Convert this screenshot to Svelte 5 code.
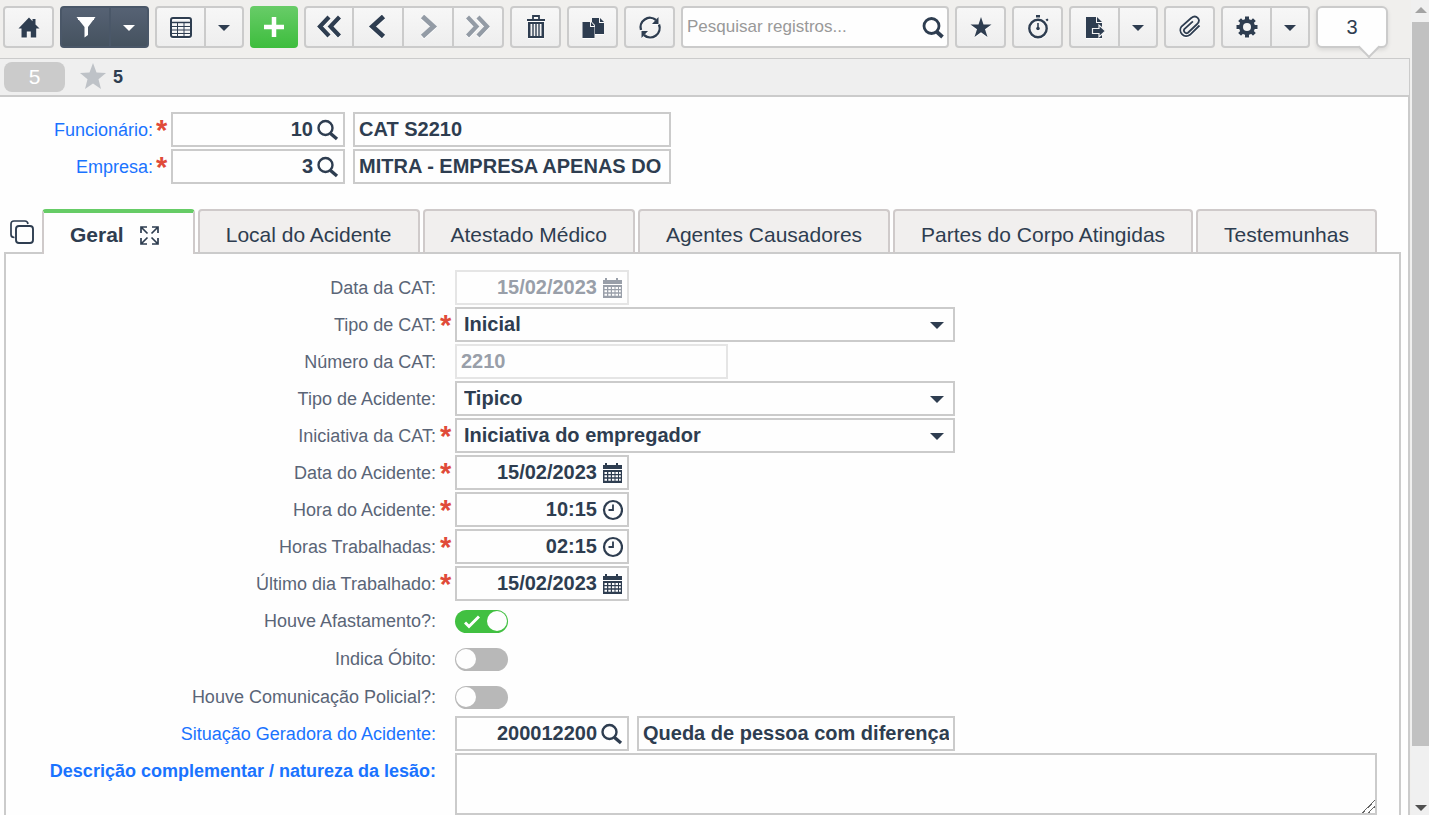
<script>
  let employee = $state('10');
  let company = $state('3');
  let search = $state('');
  let activeTab = $state('Geral');

  const tabs = [
    'Geral',
    'Local do Acidente',
    'Atestado Médico',
    'Agentes Causadores',
    'Partes do Corpo Atingidas',
    'Testemunhas'
  ];

  let fields = $state([
    { id: 'data-cat', label: 'Data da CAT:', type: 'date', value: '15/02/2023', disabled: true },
    { id: 'tipo-cat', label: 'Tipo de CAT:', type: 'select', value: 'Inicial', options: ['Inicial', 'Reabertura'], required: true },
    { id: 'numero-cat', label: 'Número da CAT:', type: 'text', value: '2210', disabled: true },
    { id: 'tipo-acidente', label: 'Tipo de Acidente:', type: 'select', value: 'Tipico', options: ['Tipico', 'Trajeto'] },
    { id: 'iniciativa', label: 'Iniciativa da CAT:', type: 'select', value: 'Iniciativa do empregador', options: ['Iniciativa do empregador', 'Ordem judicial'], required: true },
    { id: 'data-acidente', label: 'Data do Acidente:', type: 'date', value: '15/02/2023', required: true },
    { id: 'hora-acidente', label: 'Hora do Acidente:', type: 'time', value: '10:15', required: true },
    { id: 'horas-trabalhadas', label: 'Horas Trabalhadas:', type: 'time', value: '02:15', required: true },
    { id: 'ultimo-dia', label: 'Último dia Trabalhado:', type: 'date', value: '15/02/2023', required: true }
  ]);

  let toggles = $state([
    { id: 'afastamento', label: 'Houve Afastamento?:', checked: true },
    { id: 'obito', label: 'Indica Óbito:', checked: false },
    { id: 'policial', label: 'Houve Comunicação Policial?:', checked: false }
  ]);

  let situation = $state('200012200');
  let description = $state('');
</script>

{#snippet icon(name)}
  <svg class="icon" viewBox="0 0 24 24" width="24" height="24" aria-hidden="true">
    {#if name === 'home'}
      <path d="M12 2.500 1.500 13.500H4.500v9h5.300v-6h4v6h5.400v-9h3.300L18.500 9.400V4h-3v2.200z" />
    {:else if name === 'filter'}
      <path d="M2.500 2h19L14 12v8l-3.500 2.500V12z" />
      <path class="line" d="M4 4.500h16" stroke="#bfc5cc" />
    {:else if name === 'table'}
      <rect class="line" x="2" y="3" width="20" height="19" rx="2" stroke-width="2" />
      <path class="line" d="M2 7.500h20" stroke-width="1.500" />
      <path class="line" d="M2 11.500h20M2 15h20M2 18.500h20M8.500 8v14M15 8v14" stroke-width="1" />
    {:else if name === 'plus'}
      <path class="line" d="M12 2v20M2 12h20" stroke-width="4.500" />
    {:else if name === 'first'}
      <path class="line" d="M12 2 3 11.500l9 9.500M22.500 2l-9 9.500 9 9.500" stroke-width="4.200" />
    {:else if name === 'prev'}
      <path class="line" d="M17.500 1.500 6.500 11.500l11 10" stroke-width="4.800" />
    {:else if name === 'next'}
      <path class="line" d="M6.500 1.500l11 10-11 10" stroke-width="4.800" />
    {:else if name === 'last'}
      <path class="line" d="M1.500 2l9 9.500-9 9.500M12 2l9 9.500-9 9.500" stroke-width="4.200" />
    {:else if name === 'trash'}
      <path class="line" d="M9 4V1h6v3" stroke-width="1.800" />
      <path d="M3 4h18v2H3z" />
      <path fill-rule="evenodd" d="M4 7h16v16H4zM6.500 9v12h1.800V9zM9.700 9v12h1.600V9zM12.700 9v12h1.600V9zM15.700 9v12h1.800V9z" />
    {:else if name === 'copy'}
      <path d="M11 3h7v5h5v11H14V10l-3-3z" />
      <path d="M19 3l4 4h-4z" />
      <path d="M1.500 7H9v5h4.500v11h-12zM10 7l3.500 4H10z" />
    {:else if name === 'refresh'}
      <path class="line" d="M3 15A9.400 9.400 0 0 1 18 5M21 9.500A9.400 9.400 0 0 1 6 20" stroke-width="2.400" />
      <path d="M20.500 2v7h-6.500zM3.500 23v-7h6.500z" />
    {:else if name === 'search'}
      <circle class="line" cx="10.500" cy="11" r="7.500" stroke-width="2.800" />
      <path class="line" d="m15.500 16.500 6 5.500" stroke-width="3.800" />
    {:else if name === 'star'}
      <path d="m12 2 2.500 7.500H22.500L16 14.200l2.500 7.800-6.500-4.800L5.500 22 8 14.200 1.500 9.500h8z" />
    {:else if name === 'stopwatch'}
      <circle class="line" cx="12" cy="13.500" r="8.700" stroke-width="2.400" />
      <path d="M10 0h4v2.500h-4zM19.500 4.500l2-1 1 1.500-1.500 1.500z" />
      <path class="line" d="M12 8v7" stroke-width="1.600" />
      <circle cx="12" cy="13.500" r="1.800" />
    {:else if name === 'export'}
      <path d="M3 2h10v6h6v15H3zM14 2l5 5h-5z" />
      <path d="M9.500 13.500H16v-3.500l6.500 6-6.500 6v-3.500H9.500z" stroke="#f2f2f2" stroke-width="1.200" />
    {:else if name === 'clip'}
      <path class="line" d="m21.500 10.500-9.500 9.300a6 6 0 0 1-8.500-8.300l9.700-8.500c5-4 10.300 1.500 6 6l-9.200 8.700a2.600 2.600 0 0 1-3.600-3.600l8.500-7.800" stroke-width="1.800" />
    {:else if name === 'gear'}
      <path class="line" d="M12 1.500v21M1.500 12h21M4.600 4.600l14.800 14.800M19.400 4.600 4.600 19.400" stroke-width="4" />
      <circle cx="12" cy="12" r="8" />
      <circle cx="12" cy="12" r="4" fill="#f3f3f3" />
    {/if}
  </svg>
{/snippet}

{#snippet caret()}
  <svg class="caret" viewBox="0 0 14 7" width="14" height="7" aria-hidden="true">
    <path d="M0 0h14L7 7z" />
  </svg>
{/snippet}

{#snippet toolButton(name, label)}
  <button type="button" class="tool" aria-label={label}>{@render icon(name)}</button>
{/snippet}

{#snippet splitButton(name, label, dark)}
  <div class="group" class:dark>
    <button type="button" class="tool" aria-label={label}>{@render icon(name)}</button>
    <button type="button" class="tool more" aria-label="Mais opções de {label}">{@render caret()}</button>
  </div>
{/snippet}

{#snippet fieldIcon(type)}
  <svg viewBox="0 0 22 22" width="22" height="22" aria-hidden="true">
    {#if type === 'date'}
      <path d="M2 3h2V1h2v2h9V1h2v2h4v4H2z" />
      <path fill-rule="evenodd" d="M2 8h19v13H2zM3.500 10v2h2.500v-2zM7.300 10v2h2.500v-2zM11 10v2h2.500v-2zM14.500 10v2H17v-2zM18 10v2h1.800v-2zM3.500 13.300v2h2.500v-2zM7.300 13.300v2h2.500v-2zM11 13.300v2h2.500v-2zM14.500 13.300v2H17v-2zM18 13.300v2h1.800v-2zM3.500 16.700v2h2.500v-2zM7.300 16.700v2h2.500v-2zM11 16.700v2h2.500v-2zM14.500 16.700v2H17v-2zM18 16.700v2h1.800v-2z" />
    {:else if type === 'time'}
      <circle class="line" cx="12" cy="11" r="9" stroke-width="2.200" />
      <path class="line" d="M12 5.500V11H7.500" stroke-width="1.800" />
    {:else}
      <circle class="line" cx="8.500" cy="9" r="7" stroke-width="2.400" />
      <path class="line" d="m13.500 14.500 6.500 5.500" stroke-width="3.400" />
    {/if}
  </svg>
{/snippet}

<div class="app">
  <div class="page">
    <header class="toolbar">
      {@render toolButton('home', 'Início')}
      {@render splitButton('filter', 'Filtro', true)}
      {@render splitButton('table', 'Grade', false)}
      <button type="button" class="tool add" aria-label="Novo">{@render icon('plus')}</button>
      <div class="group nav">
        <button type="button" class="tool" aria-label="Primeiro">{@render icon('first')}</button>
        <button type="button" class="tool" aria-label="Anterior">{@render icon('prev')}</button>
        <button type="button" class="tool" aria-label="Próximo" disabled>{@render icon('next')}</button>
        <button type="button" class="tool" aria-label="Último" disabled>{@render icon('last')}</button>
      </div>
      {@render toolButton('trash', 'Excluir')}
      {@render toolButton('copy', 'Duplicar')}
      {@render toolButton('refresh', 'Atualizar')}
      <div class="search">
        <input type="text" aria-label="Pesquisar registros" placeholder="Pesquisar registros..." bind:value={search} />
        <button type="button" aria-label="Pesquisar">{@render icon('search')}</button>
      </div>
      {@render toolButton('star', 'Favoritos')}
      {@render toolButton('stopwatch', 'Cronômetro')}
      {@render splitButton('export', 'Exportar', false)}
      {@render toolButton('clip', 'Anexos')}
      {@render splitButton('gear', 'Configurações', false)}
      <div class="bubble">3</div>
    </header>

    <div class="status">
      <span class="pill">5</span>
      <svg class="rating" viewBox="0 0 28 28" width="28" height="28" aria-hidden="true">
        <path d="m14 0 3.500 9.500 9.500.500-7.500 6.200L22 26l-8-5.500L6 26l2.500-9.800L1 10l9.500-.500z" />
      </svg>
      <strong>5</strong>
    </div>

    <main>
      <section class="head">
        <div class="row">
          <label class="link" for="funcionario">Funcionário:</label>
          <span class="required">*</span>
          <div class="box short">
            <input id="funcionario" class="right" type="text" bind:value={employee} />
            <button type="button" aria-label="Buscar funcionário">{@render fieldIcon('search')}</button>
          </div>
          <div class="box name">
            <input type="text" aria-label="Nome do funcionário" value="CAT S2210" readonly />
          </div>
        </div>
        <div class="row">
          <label class="link" for="empresa">Empresa:</label>
          <span class="required">*</span>
          <div class="box short">
            <input id="empresa" class="right" type="text" bind:value={company} />
            <button type="button" aria-label="Buscar empresa">{@render fieldIcon('search')}</button>
          </div>
          <div class="box name">
            <input type="text" aria-label="Nome da empresa" value="MITRA - EMPRESA APENAS DO" readonly />
          </div>
        </div>
      </section>

      <div class="tabs">
        <button type="button" class="windows" aria-label="Exibir abas">
          <svg viewBox="0 0 24 24" width="24" height="24" aria-hidden="true">
            <path class="line" d="M4.500 17.500C2 17.500 1 16.500 1 14.500V4q0-3 3-3h11q2.500 0 3 3" stroke-width="1.700" />
            <rect class="line" x="6" y="6" width="17" height="17" rx="3" stroke-width="1.900" />
          </svg>
        </button>
        <div class="tablist" role="tablist">
          {#each tabs as tab}
            <button
              type="button"
              role="tab"
              class="tab"
              class:active={tab === activeTab}
              aria-selected={tab === activeTab}
              onclick={() => (activeTab = tab)}
            >
              {tab}
              {#if tab === activeTab}
                <svg viewBox="0 0 19 19" width="19" height="19" aria-hidden="true">
                  <path class="line" d="M1 7V1h6M12 1h6v6M18 12v6h-6M7 18H1v-6M1 1l6.500 6.500M18 1l-6.500 6.500M18 18l-6.500-6.500M1 18l6.500-6.500" stroke-width="1.700" />
                </svg>
              {/if}
            </button>
          {/each}
        </div>
      </div>

      <section class="panel">
        {#each fields as field (field.id)}
          <div class="row">
            <label for={field.id}>{field.label}</label>
            <span class="required">{field.required ? '*' : ''}</span>
            {#if field.type === 'select'}
              <div class="box select">
                <select id={field.id} bind:value={field.value}>
                  {#each field.options as option}
                    <option>{option}</option>
                  {/each}
                </select>
                {@render caret()}
              </div>
            {:else if field.type === 'text'}
              <div class="box medium" class:disabled={field.disabled}>
                <input id={field.id} type="text" bind:value={field.value} disabled={field.disabled} />
              </div>
            {:else}
              <div class="box short" class:disabled={field.disabled}>
                <input id={field.id} class="right" type="text" bind:value={field.value} disabled={field.disabled} />
                <button type="button" aria-label="Escolher" disabled={field.disabled}>{@render fieldIcon(field.type)}</button>
              </div>
            {/if}
          </div>
        {/each}

        <div class="toggles">
          {#each toggles as toggle (toggle.id)}
            <div class="row">
              <label for={toggle.id}>{toggle.label}</label>
              <span class="required"></span>
              <div class="switch">
                <input id={toggle.id} type="checkbox" role="switch" bind:checked={toggle.checked} />
                {#if toggle.checked}
                  <svg viewBox="0 0 16 14" width="16" height="14" aria-hidden="true">
                    <path class="line" d="m1 7.500 4 4L15 1.500" stroke-width="3" />
                  </svg>
                {/if}
              </div>
            </div>
          {/each}
        </div>

        <div class="row">
          <label class="link" for="situacao">Situação Geradora do Acidente:</label>
          <span class="required"></span>
          <div class="box short">
            <input id="situacao" class="right" type="text" bind:value={situation} />
            <button type="button" aria-label="Buscar situação geradora">{@render fieldIcon('search')}</button>
          </div>
          <div class="box name">
            <input type="text" aria-label="Descrição da situação geradora" value="Queda de pessoa com diferença" readonly />
          </div>
        </div>
        <div class="row">
          <label class="link bold" for="descricao">Descrição complementar / natureza da lesão:</label>
          <span class="required"></span>
          <textarea id="descricao" bind:value={description}></textarea>
        </div>
      </section>
    </main>
  </div>

  <div class="scrollbar" aria-hidden="true">
    <svg viewBox="0 0 12 6" width="12" height="6"><path d="M0 6 6 0l6 6z" fill="#a3a3a3" /></svg>
    <div class="thumb"></div>
    <svg viewBox="0 0 12 6" width="12" height="6"><path d="M0 0h12L6 6z" fill="#505050" /></svg>
  </div>
</div>

<style>
  :global(body) {
    background: #fefefe;
  }

  .app {
    --dark: #2e3d50;
    --line: #cbcbcb;
    display: flex;
    height: 100vh;
    overflow: hidden;
    font-family: 'Liberation Sans', Arial, sans-serif;
    color: var(--dark);
  }

  .app * {
    box-sizing: border-box;
  }

  button,
  input,
  select,
  textarea {
    margin: 0;
    font-family: inherit;
    color: inherit;
  }

  button {
    padding: 0;
    border: 0;
    background: none;
    cursor: pointer;
  }

  svg {
    flex: none;
    display: block;
    fill: currentColor;
  }

  .line {
    fill: none;
    stroke: currentColor;
  }

  .page {
    flex: 1;
    min-width: 0;
    display: flex;
    flex-direction: column;
    padding-right: 1px;
    background: #f0efed;
  }

  /* Toolbar */
  .toolbar {
    flex: none;
    display: flex;
    gap: 6px;
    height: 58px;
    padding: 6px 22px 10px 3px;
  }

  .tool {
    flex: none;
    display: flex;
    align-items: center;
    justify-content: center;
    width: 51px;
    height: 42px;
    border: 2px solid var(--line);
    border-radius: 4px;
    background: linear-gradient(#f7f7f7, #eeeeee);
  }

  .tool .icon {
    filter: drop-shadow(0 1px 0 #fff);
  }

  .tool:disabled {
    color: #939ba5;
  }

  .group {
    flex: none;
    display: flex;
  }

  .group .tool:not(:first-child) {
    border-left: 0;
    border-top-left-radius: 0;
    border-bottom-left-radius: 0;
  }

  .group .tool:not(:last-child) {
    border-top-right-radius: 0;
    border-bottom-right-radius: 0;
  }

  .tool.more {
    width: 38px;
    padding-top: 2px;
  }

  .tool .caret {
    width: 12px;
    height: 6px;
  }

  .nav .tool {
    width: 50px;
  }

  .dark .tool {
    border-color: #4a5768;
    background: linear-gradient(#566274, #45525f);
    color: #fff;
  }

  .dark .tool .icon,
  .add .icon {
    filter: none;
  }

  .tool.add {
    width: 48px;
    border: 0;
    background: linear-gradient(#68cc68, #3dbd3d);
    color: #fff;
  }

  .search {
    flex: 1;
    min-width: 0;
    display: flex;
    align-items: center;
    height: 42px;
    padding: 0 2px 0 4px;
    border: 2px solid var(--line);
    border-radius: 4px;
    background: #fefefe;
  }

  .search input {
    flex: 1;
    min-width: 0;
    padding: 0;
    border: 0;
    outline: 0;
    background: none;
    font-size: 17px;
  }

  .search input::placeholder {
    color: #999;
    opacity: 1;
  }

  .bubble {
    position: relative;
    flex: none;
    width: 72px;
    height: 42px;
    border: 2px solid var(--line);
    border-radius: 6px;
    background: #fefefe;
    box-shadow: 0 2px 4px rgba(0, 0, 0, 0.1);
    font-size: 20px;
    line-height: 38px;
    text-align: center;
  }

  .bubble::after {
    content: '';
    position: absolute;
    right: 9px;
    bottom: -9px;
    width: 14px;
    height: 14px;
    border: solid var(--line);
    border-width: 0 2px 2px 0;
    background: linear-gradient(135deg, transparent 50%, #fefefe 50%);
    transform: rotate(45deg);
  }

  .status {
    flex: none;
    display: flex;
    align-items: center;
    height: 39px;
    padding-left: 4px;
    border: solid var(--line);
    border-width: 1px 1px 2px 0;
    background: #efefef;
  }

  .pill {
    width: 61px;
    border-radius: 8px;
    background: var(--line);
    color: #fff;
    font-size: 21px;
    line-height: 30px;
    text-align: center;
  }

  .rating {
    margin: 0 6px 0 14px;
    color: #bec2c7;
  }

  .status strong {
    font-size: 18px;
  }

  /* Form */
  main {
    flex: 1;
    min-height: 0;
    display: flex;
    flex-direction: column;
    padding: 15px 7px 0 0;
    border-right: 2px solid var(--line);
    background: #fefefe;
  }

  .head,
  .panel {
    display: flex;
    flex-direction: column;
    gap: 2px;
  }

  .row {
    flex: none;
    display: flex;
  }

  .row label {
    flex: none;
    width: 430px;
    padding-top: 2px;
    font-size: 18px;
    line-height: 33px;
    text-align: right;
    white-space: nowrap;
    color: #5a6577;
  }

  .head .row label {
    width: 153px;
  }

  .row .link {
    color: #1a73ff;
  }

  .row .bold {
    font-weight: bold;
  }

  .required {
    flex: none;
    width: 19px;
    height: 35px;
    padding: 4px 0 0 4px;
    font-size: 29px;
    font-weight: bold;
    line-height: 28px;
    color: #e04b39;
  }

  .head .required {
    width: 18px;
    padding-left: 3px;
  }

  .box {
    flex: none;
    display: flex;
    align-items: center;
    height: 35px;
    border: 2px solid var(--line);
  }

  .box.disabled {
    border-color: #e5e5e5;
    color: #999fa9;
  }

  .short {
    width: 174px;
    padding-right: 4px;
    gap: 4px;
  }

  .medium {
    width: 273px;
  }

  .name {
    width: 318px;
    margin-left: 8px;
  }

  .box input,
  .box select {
    flex: 1;
    min-width: 0;
    height: 31px;
    padding: 0 4px;
    border: 0;
    outline: 0;
    background: none;
    font-size: 20px;
    font-weight: bold;
  }

  .box .right {
    padding: 0;
    text-align: right;
  }

  .select {
    display: grid;
    width: 500px;
  }

  .box select {
    grid-area: 1 / 1;
    padding: 0 7px 1px;
    appearance: none;
  }

  .select .caret {
    grid-area: 1 / 1;
    justify-self: end;
    margin: 2px 9px 0 0;
    pointer-events: none;
  }

  /* Tabs */
  .tabs {
    position: relative;
    flex: none;
    display: flex;
    margin: 25px 0 -2px 4px;
  }

  .windows {
    width: 38px;
    padding-left: 6px;
  }

  .tablist {
    display: flex;
    gap: 3px;
  }

  .tab {
    display: flex;
    align-items: center;
    gap: 16px;
    height: 45px;
    padding: 7px 26px 0;
    border: 2px solid #cfcaca;
    border-bottom-color: var(--line);
    border-radius: 4px 4px 0 0;
    background: #f1efee;
    font-size: 21px;
    white-space: nowrap;
  }

  .tab.active {
    padding: 3px 34px 0 26px;
    border-top: 4px solid #66cc66;
    border-bottom: 0;
    background: #fefefe;
    font-weight: bold;
  }

  .panel {
    flex: 1 0 auto;
    margin-left: 4px;
    padding: 16px 22px 16px 0;
    border: 2px solid var(--line);
  }

  .toggles {
    display: flex;
    flex-direction: column;
    gap: 3px;
  }

  .switch {
    display: grid;
    align-items: center;
    height: 35px;
    padding-top: 2px;
  }

  .switch input {
    grid-area: 1 / 1;
    display: flex;
    width: 53px;
    height: 23px;
    padding: 0 1px;
    appearance: none;
    border-radius: 12px;
    background: #b8b8b8;
    cursor: pointer;
  }

  .switch input::before {
    content: '';
    width: 20px;
    height: 20px;
    margin-top: 1px;
    border-radius: 50%;
    background: #fefefe;
  }

  .switch input:checked {
    justify-content: flex-end;
    background: #41c041;
  }

  .switch svg {
    grid-area: 1 / 1;
    margin-left: 9px;
    color: #fff;
    pointer-events: none;
  }

  textarea {
    flex: 1;
    height: 62px;
    padding: 4px;
    border: 2px solid var(--line);
    background: none;
    font-size: 20px;
    resize: vertical;
  }

  textarea::-webkit-resizer {
    background: linear-gradient(135deg, transparent 55%, #666 55% 60%, transparent 60% 75%, #666 75% 80%, transparent 80%);
  }

  /* Scroll rail */
  .scrollbar {
    flex: none;
    display: flex;
    flex-direction: column;
    align-items: center;
    width: 18px;
    padding: 7px 0 4px 1px;
    background: #f0f0f0;
  }

  .thumb {
    width: 100%;
    height: 90%;
    margin: 9px 0 auto;
    background: #c1c1c1;
  }
</style>
